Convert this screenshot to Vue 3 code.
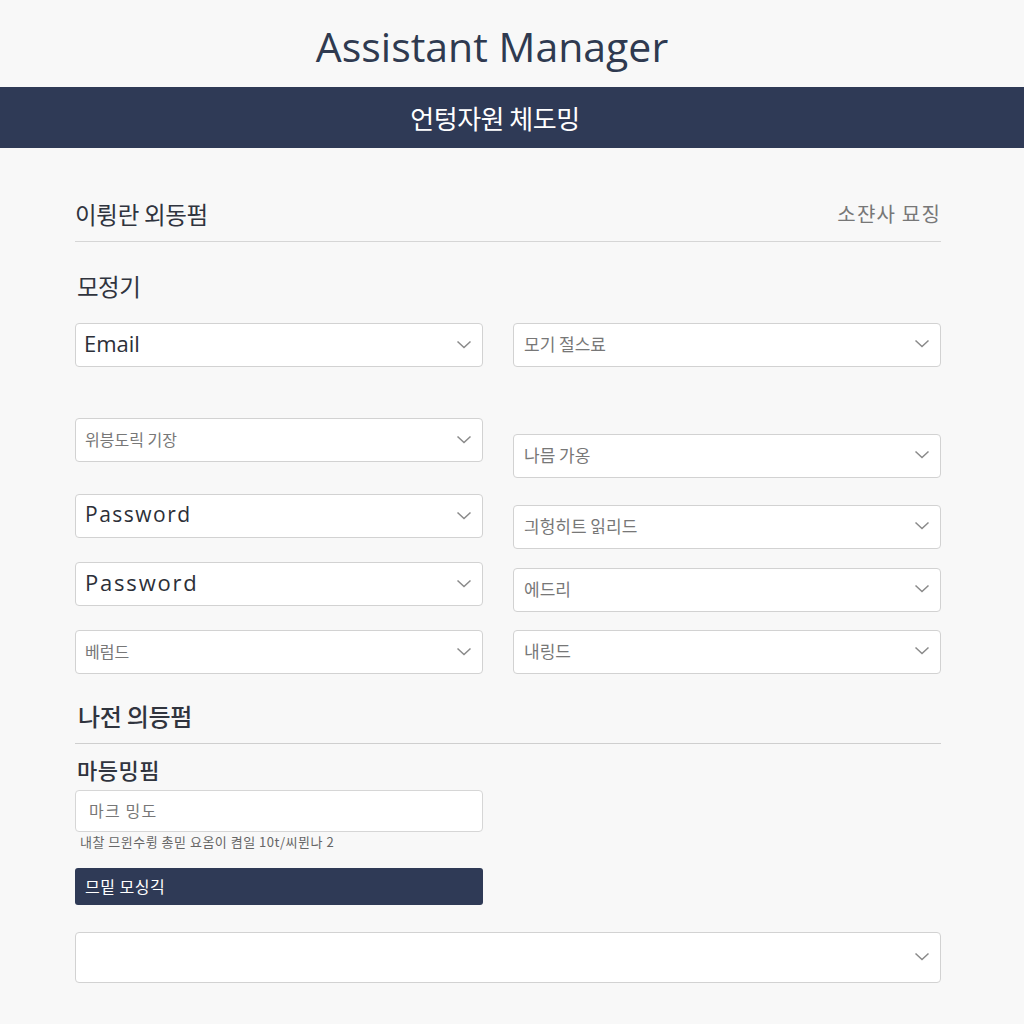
<template>
  <div class="page">
    <header class="top">
      <h1 class="top__title">Assistant Manager</h1>
    </header>
    <div class="band">언텅자원 체도밍</div>

    <main class="form">
      <div class="head">
        <h2 class="head__title">이륑란 외동펌</h2>
        <span class="head__side">소쟌사 묘징</span>
      </div>

      <h3 class="sub">모정기</h3>

      <div class="cols">
        <div class="col">
          <div
            v-for="f in leftFields"
            :key="f.id"
            class="field"
            :class="[f.gap, f.strong ? 'field--strong' : '']"
          >
            <span :class="f.cls">{{ f.text }}</span>
            <svg class="chev" width="16" height="9" viewBox="0 0 16 9"><path d="M1.5 1.5 8 7.5l6.5-6" /></svg>
          </div>
        </div>
        <div class="col col--right">
          <div v-for="f in rightFields" :key="f.id" class="field" :class="f.gap">
            <span>{{ f.text }}</span>
            <svg class="chev" width="16" height="9" viewBox="0 0 16 9"><path d="M1.5 1.5 8 7.5l6.5-6" /></svg>
          </div>
        </div>
      </div>

      <div class="head head--second">
        <h2 class="head__title head__title--big">나전 의등펌</h2>
      </div>

      <div class="half">
        <label class="label">마등밍핌</label>
        <div class="input">마크 밍도</div>
        <p class="hint">내찰 므윈수륑 총믿 요옴이 켬일 10t/씨뮌나 2</p>
        <button class="btn">므밑 모싱긱</button>
      </div>

      <div class="field field--wide">
        <span></span>
        <svg class="chev" width="16" height="9" viewBox="0 0 16 9"><path d="M1.5 1.5 8 7.5l6.5-6" /></svg>
      </div>
    </main>
  </div>
</template>

<script setup>
const leftFields = [
  { id: 1, text: 'Email', strong: true, cls: 'email' },
  { id: 2, text: '위븡도릭 기장', gap: 'gap-51' },
  { id: 3, text: 'Password', strong: true, cls: 'pass', gap: 'gap-32' },
  { id: 4, text: 'Password', strong: true, cls: 'pass pass--wide', gap: 'gap-24' },
  { id: 5, text: '베럼드', gap: 'gap-24' }
]

const rightFields = [
  { id: 1, text: '모기 절스료' },
  { id: 2, text: '나믐 가옹', gap: 'gap-67' },
  { id: 3, text: '긔헝히트 읽리드', gap: 'gap-27' },
  { id: 4, text: '에드리', gap: 'gap-19' },
  { id: 5, text: '내링드', gap: 'gap-18' }
]
</script>

<style>
html, body { background: #f8f8f8; }
</style>

<style scoped>
.page {
  height: 1024px;
  overflow: hidden;
  background: #f8f8f8;
  color: #2d3240;
  font-family: "Open Sans", "Noto Sans CJK KR", sans-serif;
}

.top { height: 87px; display: flex; align-items: center; justify-content: center; padding-right: 40px; padding-top: 5px; box-sizing: border-box; }
.top__title { margin: 0; font-size: 41px; font-weight: 400; color: #2f3a50; line-height: 1; }

.band {
  height: 61px;
  background: #2f3a56;
  color: #fff;
  display: flex;
  align-items: center;
  justify-content: center;
  padding-right: 34px;
  font-size: 26px;
  font-family: "Noto Sans CJK KR", sans-serif;
  letter-spacing: -0.5px;
}

.form { padding: 0 83px 0 75px; font-family: "Noto Sans CJK KR", sans-serif; }

.head {
  height: 94px;
  box-sizing: border-box;
  display: flex;
  justify-content: space-between;
  align-items: flex-end;
  padding-bottom: 11px;
  border-bottom: 1px solid #d6d6d6;
}
.head__title { margin: 0; font-size: 23.5px; font-weight: 400; line-height: 32px; letter-spacing: -0.3px; color: #30343e; }
.head__title--big { margin-left: 3px; font-size: 24px; font-weight: 500; }
.head__side { font-size: 20px; line-height: 32px; color: #777; letter-spacing: 1.2px; }
.head--second { height: 38px; margin-top: 32px; padding-bottom: 11px; border-bottom-color: #cfcfcf; }

.sub { margin: 27px 0 20px 2px; font-size: 23.5px; line-height: 34px; font-weight: 400; color: #30343e; letter-spacing: -0.5px; }

.cols { display: grid; grid-template-columns: 408px 428px; gap: 30px; align-items: start; }
.col { display: flex; flex-direction: column; }
.col--right .field { font-size: 17px; padding-left: 10px; padding-bottom: 4px; }

.field {
  height: 44px;
  box-sizing: border-box;
  background: #fff;
  border: 1px solid #d2d2d2;
  border-radius: 4px;
  display: flex;
  align-items: center;
  justify-content: space-between;
  padding: 0 10px 2px 9px;
  font-size: 16px;
  color: #777;
}
.field--strong { color: #2c2f38; }
.email { font-family: "Open Sans", sans-serif; font-size: 22px; margin: 0 0 2px -1px; }
.pass { font-family: "Open Sans", sans-serif; font-size: 21px; letter-spacing: 1.5px; margin-bottom: 2px; }
.pass--wide { font-size: 22px; letter-spacing: 1.8px; }
.field--wide { height: 51px; margin-top: 27px; width: 866px; }

.gap-18 { margin-top: 18px; }
.gap-19 { margin-top: 19px; }
.gap-24 { margin-top: 24px; }
.gap-27 { margin-top: 27px; }
.gap-32 { margin-top: 32px; }
.gap-51 { margin-top: 51px; }
.gap-67 { margin-top: 67px; }

.chev { flex: none; fill: none; stroke: #8a8a8a; stroke-width: 1.5; }

.half { width: 408px; }
.label { display: block; margin: 10px 0 6px 2px; font-size: 22px; line-height: 30px; font-weight: 500; color: #30343e; letter-spacing: 0.5px; }
.input {
  height: 42px;
  box-sizing: border-box;
  background: #fff;
  border: 1px solid #d6d6d6;
  border-radius: 4px;
  padding: 0 13px 3px;
  display: flex;
  align-items: center;
  font-size: 16px;
  color: #777;
  letter-spacing: 1.2px;
}
.hint { margin: 1px 0 17px 5px; font-size: 13px; line-height: 18px; color: #666; letter-spacing: 0.5px; }
.btn {
  display: block;
  width: 100%;
  height: 37px;
  box-sizing: border-box;
  background: #2f3a56;
  border: none;
  border-radius: 3px;
  padding: 0 10px 2px;
  text-align: left;
  color: #fff;
  font-family: inherit;
  font-size: 16px;
  letter-spacing: 0.5px;
}
</style>
